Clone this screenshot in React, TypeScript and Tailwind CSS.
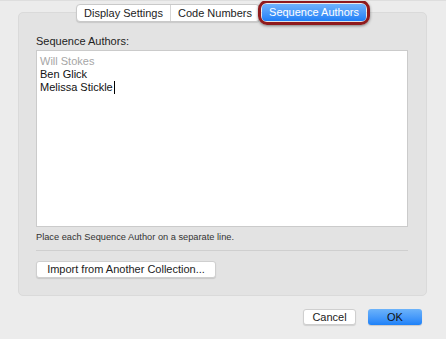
const font = { fontFamily: '"Liberation Sans", Arial, sans-serif' }

function Tabs() {
  return (
    <div className="flex justify-center relative z-10 h-[27px] items-start whitespace-nowrap">
      <div className="flex items-center mt-[3px] rounded-[4px] border border-[#c9c9c9] bg-white shadow-[0_1px_1px_rgba(0,0,0,0.12)] h-[18px]">
        <div className="w-[94px] h-full flex items-center justify-center text-[11px] text-[#222] border-r border-[#d6d6d6]">
          Display Settings
        </div>
        <div className="w-[88px] h-full flex items-center justify-center text-[11px] text-[#222]">
          Code Numbers
        </div>
      </div>
      <div className="-ml-[2px] -mt-[1px] rounded-[9px] border-[3px] border-[#8f1a1d] p-[1px] shadow-[0_1px_3px_rgba(0,0,0,0.45)]">
        <div className="w-[104px] h-[17px] rounded-[4px] bg-gradient-to-b from-[#6fb2fb] to-[#1d7ff7] flex items-center justify-center text-[11px] text-white">
          Sequence Authors
        </div>
      </div>
    </div>
  )
}

export default function App() {
  return (
    <div style={font} className="w-[446px] h-[339px] bg-[#ececec] border-t border-[#dedede] flex flex-col overflow-hidden whitespace-nowrap">
      <Tabs />
      <div className="ml-[18px] mr-[19px] -mt-[16px] rounded-[5px] bg-[#e3e3e3] border border-[#dadada] pl-[17px] pr-[18px] pt-[20px] pb-[15px]">
        <div className="text-[11px] leading-[16px] text-[#222]">Sequence Authors:</div>
        <div className="mt-[1px] h-[177px] bg-white border border-[#cbcbcb] px-[3px] pt-[4px] text-[11px] leading-[13px]">
          <div className="text-[#a6a6a6]">Will Stokes</div>
          <div className="text-[#111]">Ben Glick</div>
          <div className="text-[#111] flex items-center">
            Melissa Stickle
            <span className="inline-block w-[1px] h-[13px] bg-black ml-[1px]" />
          </div>
        </div>
        <div className="mt-[4px] text-[9.25px] leading-[13px] text-[#333]">
          Place each Sequence Author on a separate line.
        </div>
        <div className="mt-[6px] h-px bg-[#cfcfcf]" />
        <button className="mt-[10px] w-[180px] h-[17px] rounded-[3px] bg-white border border-[#cfcfcf] shadow-[0_1px_1px_rgba(0,0,0,0.12)] text-[11px] leading-[15px] text-[#222]">
          Import from Another Collection...
        </button>
      </div>
      <div className="flex justify-end gap-[12px] mr-[24px] mt-[13px]">
        <button className="w-[53px] h-[16px] rounded-[3px] bg-white border border-[#cfcfcf] shadow-[0_1px_1px_rgba(0,0,0,0.12)] text-[11px] leading-[14px] text-[#222]">
          Cancel
        </button>
        <button className="w-[54px] h-[16px] rounded-[3px] bg-gradient-to-b from-[#6cb3fa] to-[#1c81f8] shadow-[0_1px_1px_rgba(0,0,0,0.15)] text-[11px] leading-[14px] text-[#111]">
          OK
        </button>
      </div>
    </div>
  )
}
